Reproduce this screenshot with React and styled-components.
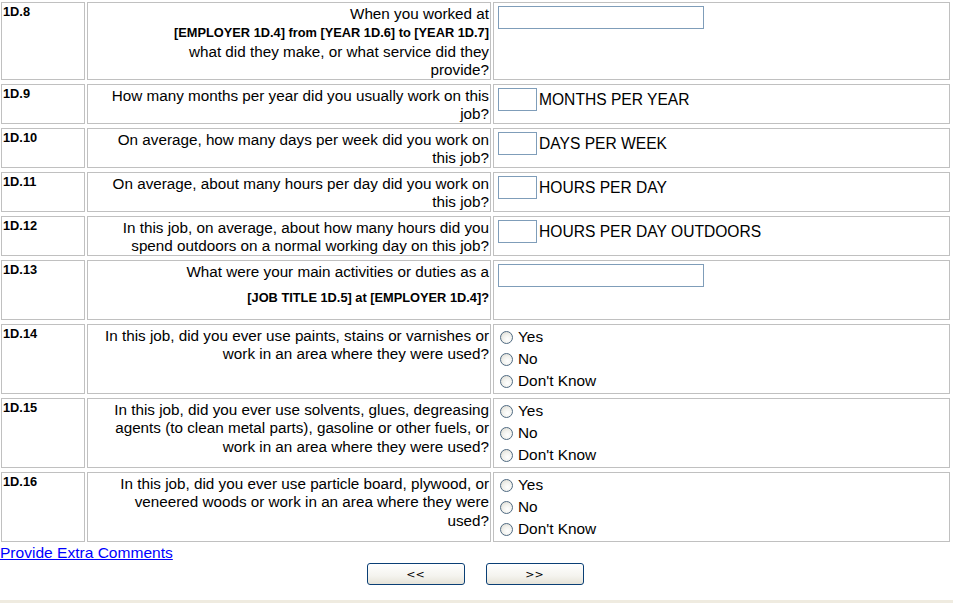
import React from "react"
import styled, { createGlobalStyle } from "styled-components"

const Global = createGlobalStyle`
  body {
    margin: 0;
    background: #fff;
    font-family: "Liberation Sans", Arial, sans-serif;
    color: #000;
  }
`

const Form = styled.div`
  display: flex;
  flex-direction: column;
  gap: 4px;
  padding: 2px 0 0 1px;
`

const Row = styled.div`
  display: grid;
  grid-template-columns: 84px 404px 457px;
  column-gap: 2px;
  height: ${({ h }) => h}px;
`

const Cell = styled.div`
  border: 1px solid #c0c0c0;
  box-sizing: border-box;
  padding: 2px 1px;
  overflow: hidden;
`

const Num = styled(Cell)`
  font-size: 12.8px;
  font-weight: bold;
  line-height: 14px;
`

const Question = styled(Cell)`
  font-size: 15.25px;
  line-height: 18.4px;
  text-align: right;
  white-space: nowrap;
`

const Small = styled.b`
  font-size: 12.8px;
`

const SubLine = styled.div`
  margin-top: ${({ top }) => top || 0}px;
  font-size: 12.8px;
  font-weight: bold;
  line-height: 14px;
`

const Answer = styled(Cell)`
  padding: 3px 4px;
  font-size: 15.6px;
`

const Field = styled.div`
  display: flex;
  align-items: center;
  gap: 2px;
`

const TextBox = styled.input`
  box-sizing: border-box;
  width: ${({ w }) => w}px;
  height: 23px;
  margin: 0;
  border: 1px solid #7f9db9;
  padding: 1px 3px;
  font: 13px "Liberation Sans", Arial, sans-serif;
  outline: none;
`

const Choices = styled.div`
  display: flex;
  flex-direction: column;
  margin-top: -2px;
  font-size: 15.4px;
`

const Choice = styled.label`
  display: flex;
  align-items: center;
  height: 22px;
  line-height: 18px;
`

const Radio = styled.input`
  appearance: none;
  width: 13px;
  height: 13px;
  margin: 0 5px 0 2px;
  border: 1px solid #4f6a82;
  border-radius: 50%;
  box-sizing: border-box;
  background: radial-gradient(circle at 60% 65%, #ffffff 0%, #f2f2ee 45%, #d8d6cc 100%);
`

const Link = styled.a`
  display: block;
  color: #0000ff;
  text-decoration: underline;
  font-size: 15.55px;
  line-height: 18px;
  margin-top: 2px;
`

const Buttons = styled.div`
  display: flex;
  justify-content: center;
  gap: 21px;
  margin-top: 1px;
  padding-right: 3px;
`

const NavButton = styled.button`
  width: 98px;
  height: 22px;
  border: 1px solid #0a3f75;
  border-radius: 3px;
  background: linear-gradient(#ffffff, #f4f3ee 60%, #e6e3d8);
  font: 11px "DejaVu Sans", Verdana, sans-serif;
  color: #000;
  padding: 0;
`

const Footer = styled.div`
  margin-top: 15px;
  height: 20px;
  background: #efebe0;
`

const RADIO = ["Yes", "No", "Don't Know"]

function RadioSet({ name }) {
  return (
    <Choices>
      {RADIO.map((o) => (
        <Choice key={o}>
          <Radio type="radio" name={name} />
          {o}
        </Choice>
      ))}
    </Choices>
  )
}

function Numeric({ label }) {
  return (
    <Field>
      <TextBox w={39} />
      {label}
    </Field>
  )
}

export default function App() {
  return (
    <>
      <Global />
      <Form>
        <Row h={78}>
          <Num>1D.8</Num>
          <Question>
            When you worked at
            <br />
            <Small>[EMPLOYER 1D.4] from [YEAR 1D.6] to [YEAR 1D.7]</Small>
            <br />
            what did they make, or what service did they
            <br />
            provide?
          </Question>
          <Answer>
            <TextBox w={206} />
          </Answer>
        </Row>
        <Row h={40}>
          <Num>1D.9</Num>
          <Question>
            How many months per year did you usually work on this
            <br />
            job?
          </Question>
          <Answer>
            <Numeric label="MONTHS PER YEAR" />
          </Answer>
        </Row>
        <Row h={40}>
          <Num>1D.10</Num>
          <Question>
            On average, how many days per week did you work on
            <br />
            this job?
          </Question>
          <Answer>
            <Numeric label="DAYS PER WEEK" />
          </Answer>
        </Row>
        <Row h={40}>
          <Num>1D.11</Num>
          <Question>
            On average, about many hours per day did you work on
            <br />
            this job?
          </Question>
          <Answer>
            <Numeric label="HOURS PER DAY" />
          </Answer>
        </Row>
        <Row h={40}>
          <Num>1D.12</Num>
          <Question>
            In this job, on average, about how many hours did you
            <br />
            spend outdoors on a normal working day on this job?
          </Question>
          <Answer>
            <Numeric label="HOURS PER DAY OUTDOORS" />
          </Answer>
        </Row>
        <Row h={60}>
          <Num>1D.13</Num>
          <Question>
            What were your main activities or duties as a
            <SubLine top={10}>[JOB TITLE 1D.5] at [EMPLOYER 1D.4]?</SubLine>
          </Question>
          <Answer>
            <TextBox w={206} />
          </Answer>
        </Row>
        <Row h={70}>
          <Num>1D.14</Num>
          <Question>
            In this job, did you ever use paints, stains or varnishes or
            <br />
            work in an area where they were used?
          </Question>
          <Answer>
            <RadioSet name="q14" />
          </Answer>
        </Row>
        <Row h={70}>
          <Num>1D.15</Num>
          <Question>
            In this job, did you ever use solvents, glues, degreasing
            <br />
            agents (to clean metal parts), gasoline or other fuels, or
            <br />
            work in an area where they were used?
          </Question>
          <Answer>
            <RadioSet name="q15" />
          </Answer>
        </Row>
        <Row h={70}>
          <Num>1D.16</Num>
          <Question>
            In this job, did you ever use particle board, plywood, or
            <br />
            veneered woods or work in an area where they were
            <br />
            used?
          </Question>
          <Answer>
            <RadioSet name="q16" />
          </Answer>
        </Row>
      </Form>
      <Link href="#">Provide Extra Comments</Link>
      <Buttons>
        <NavButton>&lt;&lt;</NavButton>
        <NavButton>&gt;&gt;</NavButton>
      </Buttons>
      <Footer />
    </>
  )
}
